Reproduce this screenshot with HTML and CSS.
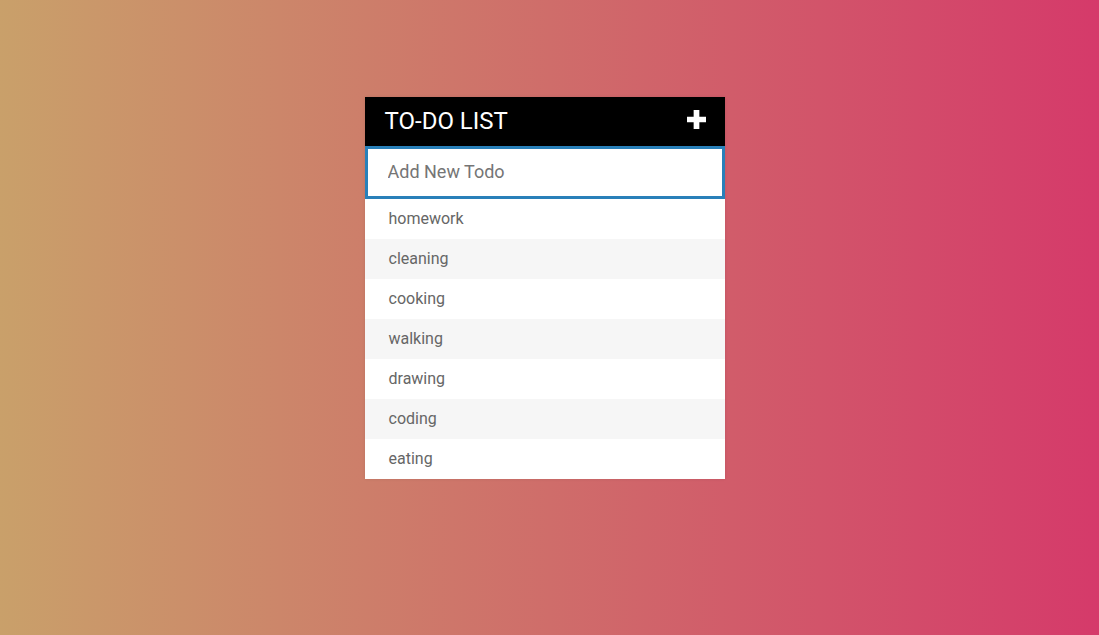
FILE: index.html
```html
<!DOCTYPE html>
<html>
<head>
<meta charset="utf-8">
<link rel="stylesheet" href="styles.css">
<title>Todo</title>
</head>
<body>
<div class="container">
  <h1 class="title">To-Do List
    <svg class="plus" width="20" height="20" viewBox="0 0 20 20"><path d="M7 0h6v7h7v6h-7v7h-6v-7h-7v-6h7z" fill="#fff"/></svg>
  </h1>
  <input class="new-todo" type="text" placeholder="Add New Todo">
  <ul class="todos">
    <li>homework</li>
    <li>cleaning</li>
    <li>cooking</li>
    <li>walking</li>
    <li>drawing</li>
    <li>coding</li>
    <li>eating</li>
  </ul>
</div>
</body>
</html>
```
FILE: styles.css
```css
html, body { height: 100%; }
body {
  margin: 0;
  padding-right: 10px;
  box-sizing: border-box;
  font-family: Roboto, "Liberation Sans", sans-serif;
  background: linear-gradient(to right, #c9a06a, #d53a6a);
  overflow: hidden;
}
.container {
  width: 360px;
  margin: 97px auto 0;
  background: #fff;
  box-shadow: 0 0 3px rgba(0,0,0,0.1);
}
.title {
  margin: 0;
  background: #000;
  color: #fff;
  font-size: 24px;
  font-weight: 400;
  text-transform: uppercase;
  padding: 10px 20px;
  line-height: 29px;
  display: flex;
  justify-content: space-between;
  align-items: center;
}
.plus { width: 19px; height: 19px; margin-top: -4px; margin-right: -1px; }
.new-todo {
  display: block;
  width: 100%;
  box-sizing: border-box;
  font-family: inherit;
  font-size: 18px;
  line-height: 21px;
  padding: 12px 13px 14px 20px;
  border: 3px solid #2980b9;
  background: #fff;
  color: #666;
  outline: none;
  margin: 0;
}
.new-todo::placeholder { color: #757575; }
.todos { list-style: none; margin: 0; padding: 0; }
.todos li {
  height: 40px;
  line-height: 40px;
  color: #666;
  font-size: 16px;
  padding-left: 24px;
  background: #fff;
}
.todos li:nth-child(2n) { background: #f6f6f6; }
```
